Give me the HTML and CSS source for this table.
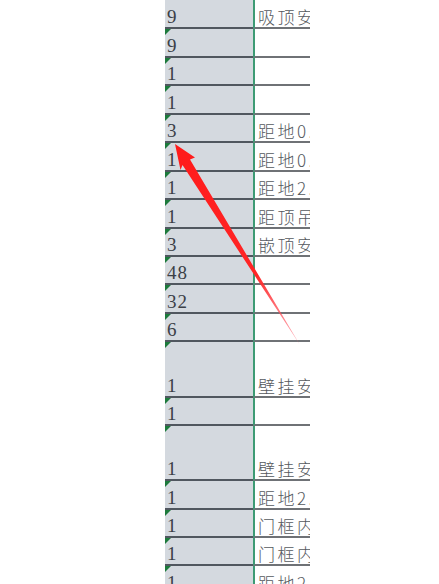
FILE: index.html
```html
<!DOCTYPE html>
<html lang="zh">
<head>
<meta charset="utf-8">
<link rel="stylesheet" href="styles.css">
</head>
<body>
<div class="page">
  <div class="sheet">
    <div class="row h29 first"><div class="num">9</div><div class="desc">吸顶安装</div></div>
    <div class="row h29"><div class="num">9</div><div class="desc"></div></div>
    <div class="row h28"><div class="num">1</div><div class="desc"></div></div>
    <div class="row h29"><div class="num">1</div><div class="desc"></div></div>
    <div class="row h28"><div class="num">3</div><div class="desc">距地0.3</div></div>
    <div class="row h29"><div class="num">1</div><div class="desc">距地0.3</div></div>
    <div class="row h28"><div class="num">1</div><div class="desc">距地2.2</div></div>
    <div class="row h29"><div class="num">1</div><div class="desc">距顶吊装</div></div>
    <div class="row h28"><div class="num">3</div><div class="desc">嵌顶安装</div></div>
    <div class="row h28"><div class="num">48</div><div class="desc"></div></div>
    <div class="row h29"><div class="num">32</div><div class="desc"></div></div>
    <div class="row h28"><div class="num">6</div><div class="desc"></div></div>
    <div class="row h56"><div class="num">1</div><div class="desc">壁挂安装</div></div>
    <div class="row h28"><div class="num">1</div><div class="desc"></div></div>
    <div class="row h55"><div class="num">1</div><div class="desc">壁挂安装</div></div>
    <div class="row h29"><div class="num">1</div><div class="desc">距地2.2</div></div>
    <div class="row h28"><div class="num">1</div><div class="desc">门框内侧</div></div>
    <div class="row h28"><div class="num">1</div><div class="desc">门框内侧</div></div>
    <div class="row h29"><div class="num">1</div><div class="desc">距地2.2</div></div>
  </div>
  <svg class="arrow" width="439" height="584" viewBox="0 0 439 584" aria-hidden="true">
    <defs>
      <linearGradient id="fade" x1="175" y1="145" x2="300" y2="345" gradientUnits="userSpaceOnUse">
        <stop offset="0" stop-color="#ff1a1a"/>
        <stop offset="0.65" stop-color="#ff2626"/>
        <stop offset="1" stop-color="#ff7080" stop-opacity="0.55"/>
      </linearGradient>
    </defs>
    <polygon points="175,144 195,157.5 190,159.5 300,345 182.5,165 180.5,170" fill="url(#fade)"/>
  </svg>
</div>
</body>
</html>
```

FILE: styles.css
```css
html, body {
  margin: 0;
  padding: 0;
  background: #ffffff;
}

.page {
  position: relative;
  width: 439px;
  height: 584px;
  overflow: hidden;
}

.sheet {
  display: flex;
  flex-direction: column;
  padding-left: 165px;
}

.row {
  display: flex;
  box-sizing: border-box;
}

.h28 { height: 28px; }
.h29 { height: 29px; }
.h55 { height: 55px; }
.h56 { height: 56px; }

.num {
  position: relative;
  box-sizing: border-box;
  width: 88px;
  background: #d4d9df;
  border-bottom: 2px solid #50575f;
  display: flex;
  align-items: flex-end;
  padding: 0 0 1px 2px;
  font-family: "Liberation Serif", "DejaVu Serif", serif;
  font-size: 19px;
  line-height: 1;
  letter-spacing: 1px;
  color: #3b4047;
}

.num::before {
  content: "";
  position: absolute;
  left: 0;
  top: 0;
  width: 0;
  height: 0;
  border-top: 6px solid #1d7a3c;
  border-right: 6px solid transparent;
}

.first .num::before {
  display: none;
}

.desc {
  box-sizing: border-box;
  width: 57px;
  border-left: 2px solid #3d9b74;
  border-bottom: 2px solid #6f7276;
  display: flex;
  align-items: flex-end;
  padding: 0 0 2px 3px;
  overflow: hidden;
  white-space: nowrap;
  font-family: "Noto Sans CJK SC", "Liberation Sans", sans-serif;
  font-size: 17px;
  font-weight: 300;
  line-height: 1;
  letter-spacing: 2.5px;
  color: #55595e;
}

.arrow {
  position: absolute;
  left: 0;
  top: 0;
  pointer-events: none;
}
```
